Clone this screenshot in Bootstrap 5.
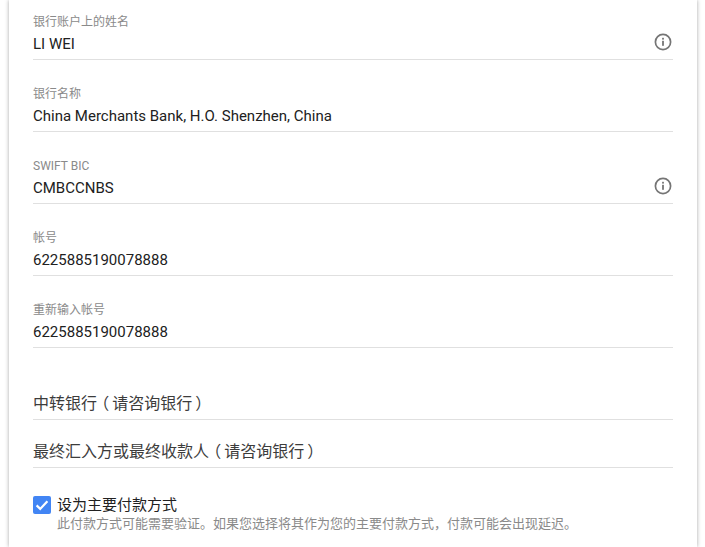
<!DOCTYPE html>
<html lang="zh">
<head>
<meta charset="utf-8">
<title>付款方式</title>
<link href="https://cdn.jsdelivr.net/npm/bootstrap@5.3.0/dist/css/bootstrap.min.css" rel="stylesheet">
<style>
html,body{height:547px;overflow:hidden;background:#fff;}
body{font-family:Roboto,"Noto Sans CJK SC",sans-serif;color:#212121;font-size:14px;}
.sheet{margin:0 8px 0 9px;height:547px;padding:0 24px;background:#fff;box-shadow:0 0 4px rgba(0,0,0,.35);}
.fld{height:72px;border-bottom:1px solid #e0e0e0;padding-top:26px;}
.fld.first{height:60px;padding-top:14px;}
.fld-label{font-size:12px;line-height:16px;color:#8a8a8a;}
.fld-row{line-height:26px;height:26px;font-size:15px;margin-top:1px;}
.info{width:20px;height:20px;flex:none;margin-top:-4px;}
.opt{height:48px;border-bottom:1px solid #e0e0e0;font-size:16px;line-height:24px;padding-top:20px;color:#3c3c3c;}
.opt.top{height:72px;padding-top:44px;}
.pn{font-feature-settings:"palt";margin:0 .225em;}
.cm{font-family:"Noto Sans CJK TC",sans-serif;}
.primary-row{margin-top:28px;}
.tick{width:18px;height:18px;background:#4285f4;border-radius:2px;flex:none;}
.primary-title{font-size:15px;line-height:18px;}
.primary-sub{font-size:13px;line-height:18px;color:#8a8a8a;}
.text-block{margin-left:-2px;}
</style>
</head>
<body>
<div class="sheet">
  <div class="fld first">
    <div class="fld-label">银行账户上的姓名</div>
    <div class="fld-row d-flex justify-content-between align-items-center"><span>LI WEI</span>
      <svg class="info" viewBox="0 0 20 20"><circle cx="10" cy="10" r="7.6" fill="none" stroke="#757575" stroke-width="1.7"/><rect x="9.1" y="8.8" width="1.8" height="5" fill="#757575"/><rect x="9.1" y="5.8" width="1.8" height="1.8" fill="#757575"/></svg>
    </div>
  </div>
  <div class="fld">
    <div class="fld-label">银行名称</div>
    <div class="fld-row">China Merchants Bank, H.O. Shenzhen, China</div>
  </div>
  <div class="fld">
    <div class="fld-label">SWIFT BIC</div>
    <div class="fld-row d-flex justify-content-between align-items-center"><span>CMBCCNBS</span>
      <svg class="info" viewBox="0 0 20 20"><circle cx="10" cy="10" r="7.6" fill="none" stroke="#757575" stroke-width="1.7"/><rect x="9.1" y="8.8" width="1.8" height="5" fill="#757575"/><rect x="9.1" y="5.8" width="1.8" height="1.8" fill="#757575"/></svg>
    </div>
  </div>
  <div class="fld">
    <div class="fld-label">帐号</div>
    <div class="fld-row">6225885190078888</div>
  </div>
  <div class="fld">
    <div class="fld-label">重新输入帐号</div>
    <div class="fld-row">6225885190078888</div>
  </div>
  <div class="opt top">中转银行<span class="pn">（</span>请咨询银行<span class="pn">）</span></div>
  <div class="opt">最终汇入方或最终收款人<span class="pn">（</span>请咨询银行<span class="pn">）</span></div>
  <div class="primary-row d-flex gap-2">
    <div class="tick">
      <svg class="d-block" width="18" height="18" viewBox="0 0 18 18"><path d="M3.6 9.4 7.2 12.9 14.4 5.2" fill="none" stroke="#fff" stroke-width="2.2"/></svg>
    </div>
    <div class="text-block">
      <div class="primary-title">设为主要付款方式</div>
      <div class="primary-sub">此付款方式可能需要验证。如果您选择将其作为您的主要付款方式<span class="cm">，</span>付款可能会出现延迟。</div>
    </div>
  </div>
</div>
<script src="https://cdn.jsdelivr.net/npm/bootstrap@5.3.0/dist/js/bootstrap.bundle.min.js"></script>
</body>
</html>
